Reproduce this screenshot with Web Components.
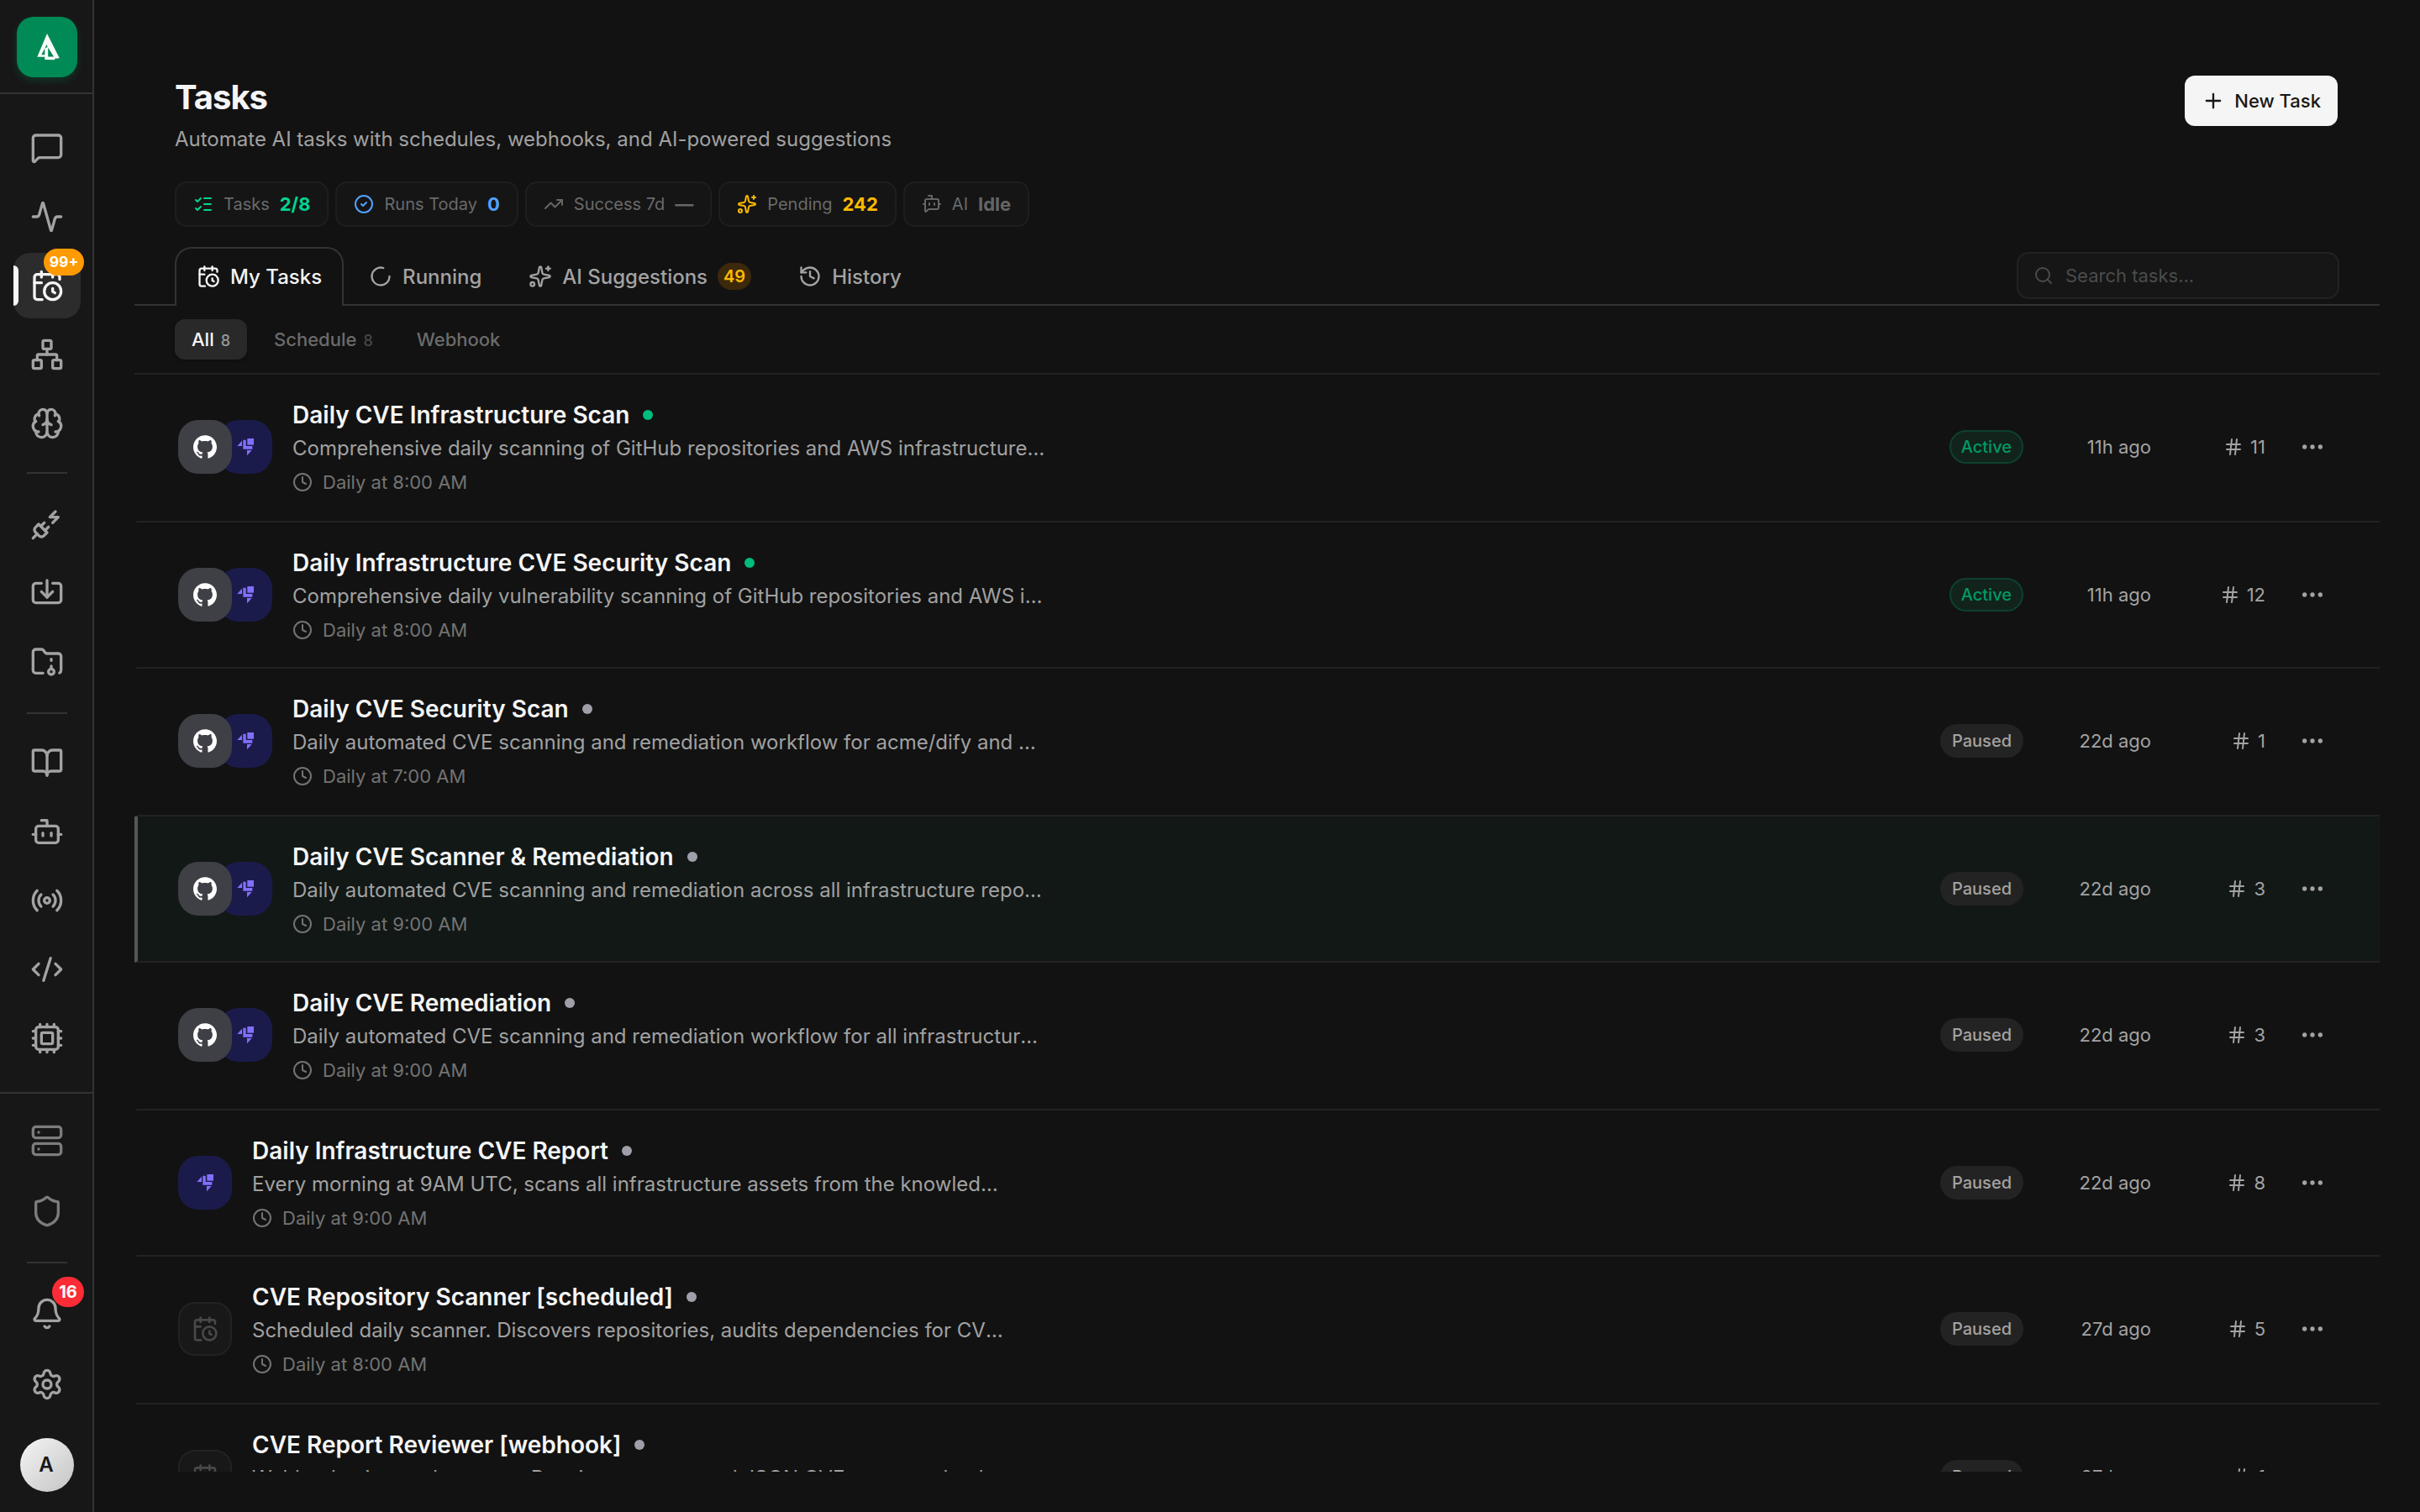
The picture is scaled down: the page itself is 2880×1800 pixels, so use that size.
<!DOCTYPE html>
<html lang="en">
<head>
<meta charset="utf-8">
<title>Tasks</title>
<style>
html,body{margin:0;height:100%;background:#121212}
body{font-family:Inter,"Liberation Sans",sans-serif;color:#f5f5f5;-webkit-font-smoothing:antialiased;overflow:hidden}
</style>
</head>
<body>
<tasks-app></tasks-app>
<script>
const ICONS = {
  message:'<path d="M22 17a2 2 0 0 1-2 2H6.828a2 2 0 0 0-1.414.586l-2.202 2.202A.71.71 0 0 1 2 21.286V5a2 2 0 0 1 2-2h16a2 2 0 0 1 2 2z"/>',
  activity:'<path d="M22 12h-2.48a2 2 0 0 0-1.93 1.46l-2.35 8.36a.25.25 0 0 1-.48 0L9.24 2.18a.25.25 0 0 0-.48 0l-2.35 8.36A2 2 0 0 1 4.49 12H2"/>',
  calendar:'<path d="M16 14v2.2l1.6 1"/><path d="M16 2v4"/><path d="M21 7.5V6a2 2 0 0 0-2-2H5a2 2 0 0 0-2 2v14a2 2 0 0 0 2 2h3.5"/><path d="M3 10h5"/><path d="M8 2v4"/><circle cx="16" cy="16" r="6"/>',
  network:'<rect x="16" y="16" width="6" height="6" rx="1"/><rect x="2" y="16" width="6" height="6" rx="1"/><rect x="9" y="2" width="6" height="6" rx="1"/><path d="M5 16v-3a1 1 0 0 1 1-1h12a1 1 0 0 1 1 1v3"/><path d="M12 12V8"/>',
  brain:'<path d="M12 18V5"/><path d="M15 13a4.17 4.17 0 0 1-3-4 4.17 4.17 0 0 1-3 4"/><path d="M17.598 6.5A3 3 0 1 0 12 5a3 3 0 1 0-5.598 1.5"/><path d="M17.997 5.125a4 4 0 0 1 2.526 5.77"/><path d="M18 18a4 4 0 0 0 2-7.464"/><path d="M19.967 17.483A4 4 0 1 1 12 18a4 4 0 1 1-7.967-.517"/><path d="M6 18a4 4 0 0 1-2-7.464"/><path d="M6.003 5.125a4 4 0 0 0-2.526 5.77"/>',
  plug:'<path d="M6.3 20.3a2.4 2.4 0 0 0 3.4 0L12 18l-6-6-2.3 2.3a2.4 2.4 0 0 0 0 3.4Z"/><path d="m2 22 3-3"/><path d="M7.5 13.5 10 11"/><path d="M10.5 16.5 13 14"/><path d="m18 3-4 4h6l-4 4"/>',
  import:'<path d="M12 3v12"/><path d="m8 11 4 4 4-4"/><path d="M8 5H4a2 2 0 0 0-2 2v10a2 2 0 0 0 2 2h16a2 2 0 0 0 2-2V7a2 2 0 0 0-2-2h-4"/>',
  archive:'<circle cx="15" cy="19" r="2"/><path d="M20.9 19.8A2 2 0 0 0 22 18V8a2 2 0 0 0-2-2h-7.9a2 2 0 0 1-1.69-.9L9.6 3.9A2 2 0 0 0 7.93 3H4a2 2 0 0 0-2 2v13a2 2 0 0 0 2 2h5.1"/><path d="M15 11v-1"/><path d="M15 17v-2"/>',
  book:'<path d="M12 7v14"/><path d="M3 18a1 1 0 0 1-1-1V4a1 1 0 0 1 1-1h5a4 4 0 0 1 4 4 4 4 0 0 1 4-4h5a1 1 0 0 1 1 1v13a1 1 0 0 1-1 1h-6a3 3 0 0 0-3 3 3 3 0 0 0-3-3z"/>',
  bot:'<path d="M12 8V4H8"/><rect width="16" height="12" x="4" y="8" rx="2"/><path d="M2 14h2"/><path d="M20 14h2"/><path d="M15 13v2"/><path d="M9 13v2"/>',
  radio:'<path d="M16.247 7.761a6 6 0 0 1 0 8.478"/><path d="M19.075 4.933a10 10 0 0 1 0 14.134"/><path d="M4.925 19.067a10 10 0 0 1 0-14.134"/><path d="M7.753 16.239a6 6 0 0 1 0-8.478"/><circle cx="12" cy="12" r="2"/>',
  code:'<path d="m18 16 4-4-4-4"/><path d="m6 8-4 4 4 4"/><path d="m14.5 4-5 16"/>',
  cpu:'<path d="M12 20v2M12 2v2M17 20v2M17 2v2M2 12h2M2 17h2M2 7h2M20 12h2M20 17h2M20 7h2M7 20v2M7 2v2"/><rect x="4" y="4" width="16" height="16" rx="2"/><rect x="8" y="8" width="8" height="8" rx="1"/>',
  server:'<rect width="20" height="8" x="2" y="2" rx="2"/><rect width="20" height="8" x="2" y="14" rx="2"/><path d="M6 6h.01M6 18h.01"/>',
  shield:'<path d="M20 13c0 5-3.5 7.5-7.66 8.95a1 1 0 0 1-.67-.01C7.5 20.5 4 18 4 13V6a1 1 0 0 1 1-1c2 0 4.5-1.2 6.24-2.72a1.17 1.17 0 0 1 1.52 0C14.51 3.81 17 5 19 5a1 1 0 0 1 1 1z"/>',
  bell:'<path d="M10.268 21a2 2 0 0 0 3.464 0"/><path d="M3.262 15.326A1 1 0 0 0 4 17h16a1 1 0 0 0 .74-1.673C19.41 13.956 18 12.499 18 8A6 6 0 0 0 6 8c0 4.499-1.411 5.956-2.738 7.326"/>',
  settings:'<path d="M9.671 4.136a2.34 2.34 0 0 1 4.659 0 2.34 2.34 0 0 0 3.319 1.915 2.34 2.34 0 0 1 2.33 4.033 2.34 2.34 0 0 0 0 3.831 2.34 2.34 0 0 1-2.33 4.033 2.34 2.34 0 0 0-3.319 1.915 2.34 2.34 0 0 1-4.659 0 2.34 2.34 0 0 0-3.32-1.915 2.34 2.34 0 0 1-2.33-4.033 2.34 2.34 0 0 0 0-3.831A2.34 2.34 0 0 1 6.35 6.051a2.34 2.34 0 0 0 3.319-1.915"/><circle cx="12" cy="12" r="3"/>',
  checks:'<path d="M13 5h8M13 12h8M13 19h8"/><path d="m3 17 2 2 4-4"/><path d="m3 7 2 2 4-4"/>',
  check:'<circle cx="12" cy="12" r="10"/><path d="m9 12 2 2 4-4"/>',
  trend:'<path d="M16 7h6v6"/><path d="m22 7-8.5 8.5-5-5L2 17"/>',
  sparkles:'<path d="M11.017 2.814a1 1 0 0 1 1.966 0l1.051 5.558a2 2 0 0 0 1.594 1.594l5.558 1.051a1 1 0 0 1 0 1.966l-5.558 1.051a2 2 0 0 0-1.594 1.594l-1.051 5.558a1 1 0 0 1-1.966 0l-1.051-5.558a2 2 0 0 0-1.594-1.594l-5.558-1.051a1 1 0 0 1 0-1.966l5.558-1.051a2 2 0 0 0 1.594-1.594z"/><path d="M20 2v4"/><path d="M22 4h-4"/><circle cx="4" cy="20" r="2"/>',
  botmsg:'<path d="M12 6V2H8"/><path d="M15 11v2"/><path d="M2 12h2"/><path d="M20 12h2"/><path d="M20 16a2 2 0 0 1-2 2H8.828a2 2 0 0 0-1.414.586l-2.202 2.202A.71.71 0 0 1 4 20.286V8a2 2 0 0 1 2-2h12a2 2 0 0 1 2 2z"/><path d="M9 11v2"/>',
  loader:'<path d="M21 12a9 9 0 1 1-6.219-8.56"/>',
  history:'<path d="M3 12a9 9 0 1 0 9-9 9.75 9.75 0 0 0-6.74 2.74L3 8"/><path d="M3 3v5h5"/><path d="M12 7v5l4 2"/>',
  clock:'<path d="M12 6v6l4 2"/><circle cx="12" cy="12" r="10"/>',
  search:'<path d="m21 21-4.34-4.34"/><circle cx="11" cy="11" r="8"/>',
  hash:'<path d="M4 9h16M4 15h16M10 3 8 21M16 3l-2 18"/>',
  plus:'<path d="M5 12h14M12 5v14"/>',
  dots:'<circle cx="12" cy="12" r="1"/><circle cx="19" cy="12" r="1"/><circle cx="5" cy="12" r="1"/>'
};
const SOLID = {
  github:['0 0 24 24','<path fill="#fff" d="M12 .297c-6.63 0-12 5.373-12 12 0 5.303 3.438 9.8 8.205 11.385.6.113.82-.258.82-.577 0-.285-.01-1.04-.015-2.04-3.338.724-4.042-1.61-4.042-1.61C4.422 18.07 3.633 17.7 3.633 17.7c-1.087-.744.084-.729.084-.729 1.205.084 1.838 1.236 1.838 1.236 1.07 1.835 2.809 1.305 3.495.998.108-.776.417-1.305.76-1.605-2.665-.3-5.466-1.332-5.466-5.93 0-1.31.465-2.38 1.235-3.22-.135-.303-.54-1.523.105-3.176 0 0 1.005-.322 3.3 1.23.96-.267 1.98-.399 3-.405 1.02.006 2.04.138 3 .405 2.28-1.552 3.285-1.23 3.285-1.23.645 1.653.24 2.873.12 3.176.765.84 1.23 1.91 1.23 3.22 0 4.61-2.805 5.625-5.475 5.92.42.36.81 1.096.81 2.22 0 1.606-.015 2.896-.015 3.286 0 .315.21.69.825.57C20.565 22.092 24 17.592 24 12.297c0-6.627-5.373-12-12-12"/>'],
  agent:['0 0 84 84','<g fill="#8170ff"><path d="M49 12h23v23H49z"/><path d="M34 17h10v22h23v11H34z"/><path d="M30 20v19H13z"/><path d="M48 54h17L48 73z"/></g>'],
  logo:['0 0 72 72','<path fill="#fafafa" fill-rule="evenodd" d="M36 20 50.8 49.2l-5.6.6V51.200l-11.900-.2v-3.200H24.300zM37.200 36.800v10.800h6.900zM35.600 33 29.300 45.300h4V37.600l3.300-1.500z"/>']
};

class AppIcon extends HTMLElement {
  constructor(){ super(); this.attachShadow({mode:'open'}); }
  connectedCallback(){
    const n = this.getAttribute('name'), s = this.getAttribute('size') || 24;
    const solid = SOLID[n];
    this.shadowRoot.innerHTML = `<style>:host{display:block;flex:none;width:${s}px;height:${s}px}svg{display:block;width:100%;height:100%;overflow:visible}</style>` +
      (solid ? `<svg viewBox="${solid[0]}">${solid[1]}</svg>`
             : `<svg viewBox="0 0 24 24" fill="none" stroke="currentColor" stroke-width="2" stroke-linecap="round" stroke-linejoin="round">${ICONS[n]}</svg>`);
  }
}

class NavItem extends HTMLElement {
  constructor(){ super(); this.attachShadow({mode:'open'}); }
  connectedCallback(){
    const badge = this.getAttribute('badge');
    this.shadowRoot.innerHTML = `<style>
      :host{display:flex;flex:none;position:relative;width:80px;height:78px;border-radius:20px;align-items:center;justify-content:center;color:#a3a3a3}
      :host([tall]){height:80px}
      :host([dim]){color:#7c7c7c}
      :host([active]){background:#2c2c2c;color:#f5f5f5}
      :host([active])::before{content:"";position:absolute;left:0;top:15px;width:6px;height:48px;border-radius:0 6px 6px 0;background:#f5f5f5}
      .b{position:absolute;right:-4px;top:-5px;box-sizing:border-box;height:32px;width:48px;border-radius:16px;background:#ff9a00;color:#fff;font-weight:700;font-size:17.500px;line-height:32px;text-align:center}
      :host([tone=red]) .b{background:#fb2c36;top:-4px;height:36px;width:38px;line-height:37px;font-size:20px;border-radius:18px}
    </style><app-icon name="${this.getAttribute('icon')}" size="40"></app-icon>${badge?`<span class="b">${badge}</span>`:''}`;
  }
}

class SideBar extends HTMLElement {
  constructor(){ super(); this.attachShadow({mode:'open'}).innerHTML = `<style>
    :host{display:flex;flex-direction:column;flex:none;box-sizing:border-box;width:112px;height:100%;background:#171717;border-right:2px solid #333}
    .brand{box-sizing:border-box;height:112px;padding:20px;border-bottom:2px solid #333;flex:none}
    .logo{width:72px;height:72px;border-radius:20px;background:#008a55;box-shadow:0 4px 10px rgba(0,138,85,.28)}
    nav{display:flex;flex-direction:column;gap:4px;padding-left:16px}
    .top{flex:1;padding-top:25px}
    hr{flex:none;width:48px;height:2px;border:0;background:#333;margin:15px 0 17px 16px}
    hr.low{margin:17px 0 15px 16px}
    .bot{border-top:2px solid #333;padding:16px 0 24px 16px}
    .bot hr{margin:16px 0 16px 16px}
    .me{margin:20px 0 0 8px;width:64px;height:64px;border-radius:50%;background:linear-gradient(135deg,#f5f5f5,#c4c4c4);color:#171717;font-weight:600;font-size:24px;line-height:64px;text-align:center;text-indent:-2px}
  </style>
  <div class="brand"><div class="logo"><app-icon name="logo" size="72"></app-icon></div></div>
  <nav class="top">
    <nav-item icon="message"></nav-item><nav-item icon="activity"></nav-item><nav-item icon="calendar" active badge="99+"></nav-item><nav-item icon="network"></nav-item><nav-item icon="brain"></nav-item>
    <hr>
    <nav-item icon="plug"></nav-item><nav-item icon="import"></nav-item><nav-item icon="archive"></nav-item>
    <hr class="low">
    <nav-item icon="book"></nav-item><nav-item icon="bot"></nav-item><nav-item icon="radio"></nav-item><nav-item icon="code"></nav-item><nav-item icon="cpu"></nav-item>
  </nav>
  <nav class="bot">
    <nav-item icon="server" tall dim></nav-item><nav-item icon="shield" tall dim></nav-item>
    <hr>
    <nav-item icon="bell" tall badge="16" tone="red"></nav-item><nav-item icon="settings" tall></nav-item>
    <div class="me">A</div>
  </nav>`; }
}

class StatChip extends HTMLElement {
  constructor(){ super(); this.attachShadow({mode:'open'}); }
  connectedCallback(){
    this.shadowRoot.innerHTML = `<style>
      :host{display:flex;box-sizing:border-box;height:54px;padding:0 20px;gap:12px;align-items:center;border:2px solid #1e1e1e;border-radius:14px;background:#151515;color:var(--tone,#666)}
      .l{font-size:20px;color:#6a6a6a}.v{font-size:22px;font-weight:700}
    </style><app-icon name="${this.getAttribute('icon')}"></app-icon><span class="l">${this.getAttribute('label')}</span><span class="v"><slot></slot></span>`;
  }
}

class TabItem extends HTMLElement {
  constructor(){ super(); this.attachShadow({mode:'open'}); }
  connectedCallback(){
    const c = this.getAttribute('count');
    this.shadowRoot.innerHTML = `<style>
      :host{display:flex;box-sizing:border-box;height:70px;padding:0 24px 2px;gap:12px;align-items:center;border:2px solid transparent;border-bottom:0;font-size:24px;font-weight:500;color:#a3a3a3;margin-bottom:-2px}
      :host([active]){border-color:#333;border-radius:20px 20px 0 0;background:#121212;color:#f5f5f5}
      .c{height:32px;line-height:32px;padding:0 7px;border-radius:16px;background:#3c290c;color:#ffb900;font-size:20px;font-weight:600;text-align:center}
    </style><app-icon name="${this.getAttribute('icon')}" size="28"></app-icon><slot></slot>${c?`<span class="c">${c}</span>`:''}`;
  }
}

class FilterChip extends HTMLElement {
  constructor(){ super(); this.attachShadow({mode:'open'}); }
  connectedCallback(){
    const c = this.getAttribute('count');
    this.shadowRoot.innerHTML = `<style>
      :host{display:flex;height:48px;padding:0 20px;gap:8px;align-items:center;border-radius:12px;font-size:22px;font-weight:500;color:#6b6b6b}
      :host([active]){background:#292929;color:#f5f5f5;box-shadow:0 2px 4px rgba(0,0,0,.2)}
      .c{font-size:18px;font-weight:500;color:#474747;padding-top:2px}
      :host([active]) .c{color:#999}
    </style><slot></slot>${c?`<span class="c">${c}</span>`:''}`;
  }
}

class TaskRow extends HTMLElement {
  constructor(){ super(); this.attachShadow({mode:'open'}); }
  connectedCallback(){
    const a = n => this.getAttribute(n), on = a('status') === 'Active';
    const kinds = a('icons').split(' ');
    this.shadowRoot.innerHTML = `<style>
      :host{display:flex;flex:none;box-sizing:border-box;height:176px;padding:0 48px;border-left:4px solid transparent;border-bottom:2px solid #222}
      :host(:nth-of-type(even)){height:174px}
      :host([selected]){background:#121816;border-left-color:#525856}
      .icons{display:flex;padding-top:54px;margin-right:24px}
      .i{box-sizing:border-box;width:64px;height:64px;border-radius:24px;display:flex;align-items:center;justify-content:center}
      .i+.i{margin-left:-16px}
      .github{background:#3f3f46;z-index:1}.agent{background:#1b1b4b}.calendar{background:#181818;border:2px solid #222;border-radius:20px;color:#484848}
      .main{flex:1;padding-top:31px}
      .t{display:flex;align-items:center;gap:16px;height:34px;font-size:28px;font-weight:600;color:#f5f5f5}
      .dot{width:12px;height:12px;border-radius:50%;background:${on?'#00bc7d':'#9f9fa9'}}
      .d{height:38px;line-height:38px;margin-top:4px;font-size:24px;color:#a1a1a1;white-space:nowrap}
      .e{display:inline-block}
      .s{display:flex;align-items:center;gap:12px;height:36px;margin-top:3px;font-size:22px;color:#737373}
      .side{display:flex;align-items:center;height:172px;font-size:22px;color:#a3a3a3}
      .b{box-sizing:border-box;height:40px;line-height:40px;padding:0 14px;border-radius:20px;font-size:20px;font-weight:500;background:#232323;color:#a3a3a3}
      .b.on{background:#12231c;border:2px solid #0d402f;color:#009966;line-height:36px;padding:0 12px}
      .w{width:152px;text-align:right}
      .n{width:136px;display:flex;gap:8px;align-items:center;justify-content:flex-end}
      .m{width:64px;margin-left:24px;display:flex;justify-content:center}
    </style>
    <div class="icons">${kinds.map(k=>`<div class="i ${k}"><app-icon name="${k}" size="${k==='calendar'?32:28}"></app-icon></div>`).join('')}</div>
    <div class="main"><div class="t"><span>${a('name')}</span><i class="dot"></i></div><div class="d"><slot></slot><span class="e">…</span></div><div class="s"><app-icon name="clock"></app-icon><span>${a('when')}</span></div></div>
    <div class="side"><span class="b${on?' on':''}">${a('status')}</span><span class="w">${a('last')}</span><span class="n"><app-icon name="hash"></app-icon><span>${a('runs')}</span></span><span class="m"><app-icon name="dots" size="32"></app-icon></span></div>`;
  }
}

class TasksApp extends HTMLElement {
  constructor(){ super(); this.attachShadow({mode:'open'}).innerHTML = `<style>
    :host{display:flex;width:2880px;height:1800px;background:#121212;overflow:hidden}
    main{flex:1;display:flex;flex-direction:column;padding:0 48px 48px;min-width:0}
    header{display:flex;justify-content:space-between;padding:90px 50px 0 48px;height:126px}
    h1{margin:0;padding-top:1px;font-size:40px;line-height:50px;font-weight:700;letter-spacing:-1px}
    p{margin:7px 0 0;font-size:24px;line-height:36px;color:#a1a1a1}
    .new{display:flex;align-items:center;gap:11px;height:60px;padding:0 20px;border-radius:12px;background:#f5f5f5;color:#171717;font-size:22px;font-weight:500}
    .stats{display:flex;gap:8px;padding:0 48px}
    .tabs{display:flex;gap:4px;box-sizing:border-box;height:94px;padding:24px 48px 0;border-bottom:2px solid #333;align-items:flex-start}
    .tabs .search{margin-left:auto;margin-top:6px}
    .search{box-sizing:border-box;display:flex;align-items:center;gap:14px;width:384px;height:56px;padding:0 18px;border:2px solid #222;border-radius:14px;background:#161616;color:#4b4b4b;font-size:22px}
    .filters{display:flex;gap:12px;padding:16px 48px;border-bottom:2px solid #222}
    .list{flex:1;min-height:0;overflow:hidden;display:flex;flex-direction:column}
  </style>
  <side-bar></side-bar>
  <main>
    <header><div><h1>Tasks</h1><p>Automate AI tasks with schedules, webhooks, and AI-powered suggestions</p></div><div class="new"><app-icon name="plus" size="28"></app-icon><span>New Task</span></div></header>
    <div class="stats">
      <stat-chip icon="checks" label="Tasks" style="--tone:#00d492">2/8</stat-chip>
      <stat-chip icon="check" label="Runs Today" style="--tone:#51a2ff">0</stat-chip>
      <stat-chip icon="trend" label="Success 7d">—</stat-chip>
      <stat-chip icon="sparkles" label="Pending" style="--tone:#ffb900">242</stat-chip>
      <stat-chip icon="botmsg" label="AI">Idle</stat-chip>
    </div>
    <div class="tabs">
      <tab-item icon="calendar" active>My Tasks</tab-item><tab-item icon="loader">Running</tab-item><tab-item icon="sparkles" count="49">AI Suggestions</tab-item><tab-item icon="history">History</tab-item>
      <div class="search"><app-icon name="search"></app-icon><span>Search tasks...</span></div>
    </div>
    <div class="filters"><filter-chip active count="8">All</filter-chip><filter-chip count="8">Schedule</filter-chip><filter-chip>Webhook</filter-chip></div>
    <div class="list">
      <task-row icons="github agent" name="Daily CVE Infrastructure Scan" when="Daily at 8:00 AM" status="Active" last="11h ago" runs="11">Comprehensive daily scanning of GitHub repositories and AWS infrastructure</task-row>
      <task-row icons="github agent" name="Daily Infrastructure CVE Security Scan" when="Daily at 8:00 AM" status="Active" last="11h ago" runs="12">Comprehensive daily vulnerability scanning of GitHub repositories and AWS i</task-row>
      <task-row icons="github agent" name="Daily CVE Security Scan" when="Daily at 7:00 AM" status="Paused" last="22d ago" runs="1">Daily automated CVE scanning and remediation workflow for acme/dify and </task-row>
      <task-row selected icons="github agent" name="Daily CVE Scanner &amp;amp; Remediation" when="Daily at 9:00 AM" status="Paused" last="22d ago" runs="3">Daily automated CVE scanning and remediation across all infrastructure repo</task-row>
      <task-row icons="github agent" name="Daily CVE Remediation" when="Daily at 9:00 AM" status="Paused" last="22d ago" runs="3">Daily automated CVE scanning and remediation workflow for all infrastructur</task-row>
      <task-row icons="agent" name="Daily Infrastructure CVE Report" when="Daily at 9:00 AM" status="Paused" last="22d ago" runs="8">Every morning at 9AM UTC, scans all infrastructure assets from the knowled</task-row>
      <task-row icons="calendar" name="CVE Repository Scanner [scheduled]" when="Daily at 8:00 AM" status="Paused" last="27d ago" runs="5">Scheduled daily scanner. Discovers repositories, audits dependencies for CV</task-row>
      <task-row icons="calendar" name="CVE Report Reviewer [webhook]" when="Webhook" status="Paused" last="27d ago" runs="1">Webhook-triggered reporter. Receives a structured JSON CVE scan results d</task-row>
    </div>
  </main>`; }
}
customElements.define('app-icon', AppIcon);
customElements.define('nav-item', NavItem);
customElements.define('side-bar', SideBar);
customElements.define('stat-chip', StatChip);
customElements.define('tab-item', TabItem);
customElements.define('filter-chip', FilterChip);
customElements.define('task-row', TaskRow);
customElements.define('tasks-app', TasksApp);
</script>
</body>
</html>
